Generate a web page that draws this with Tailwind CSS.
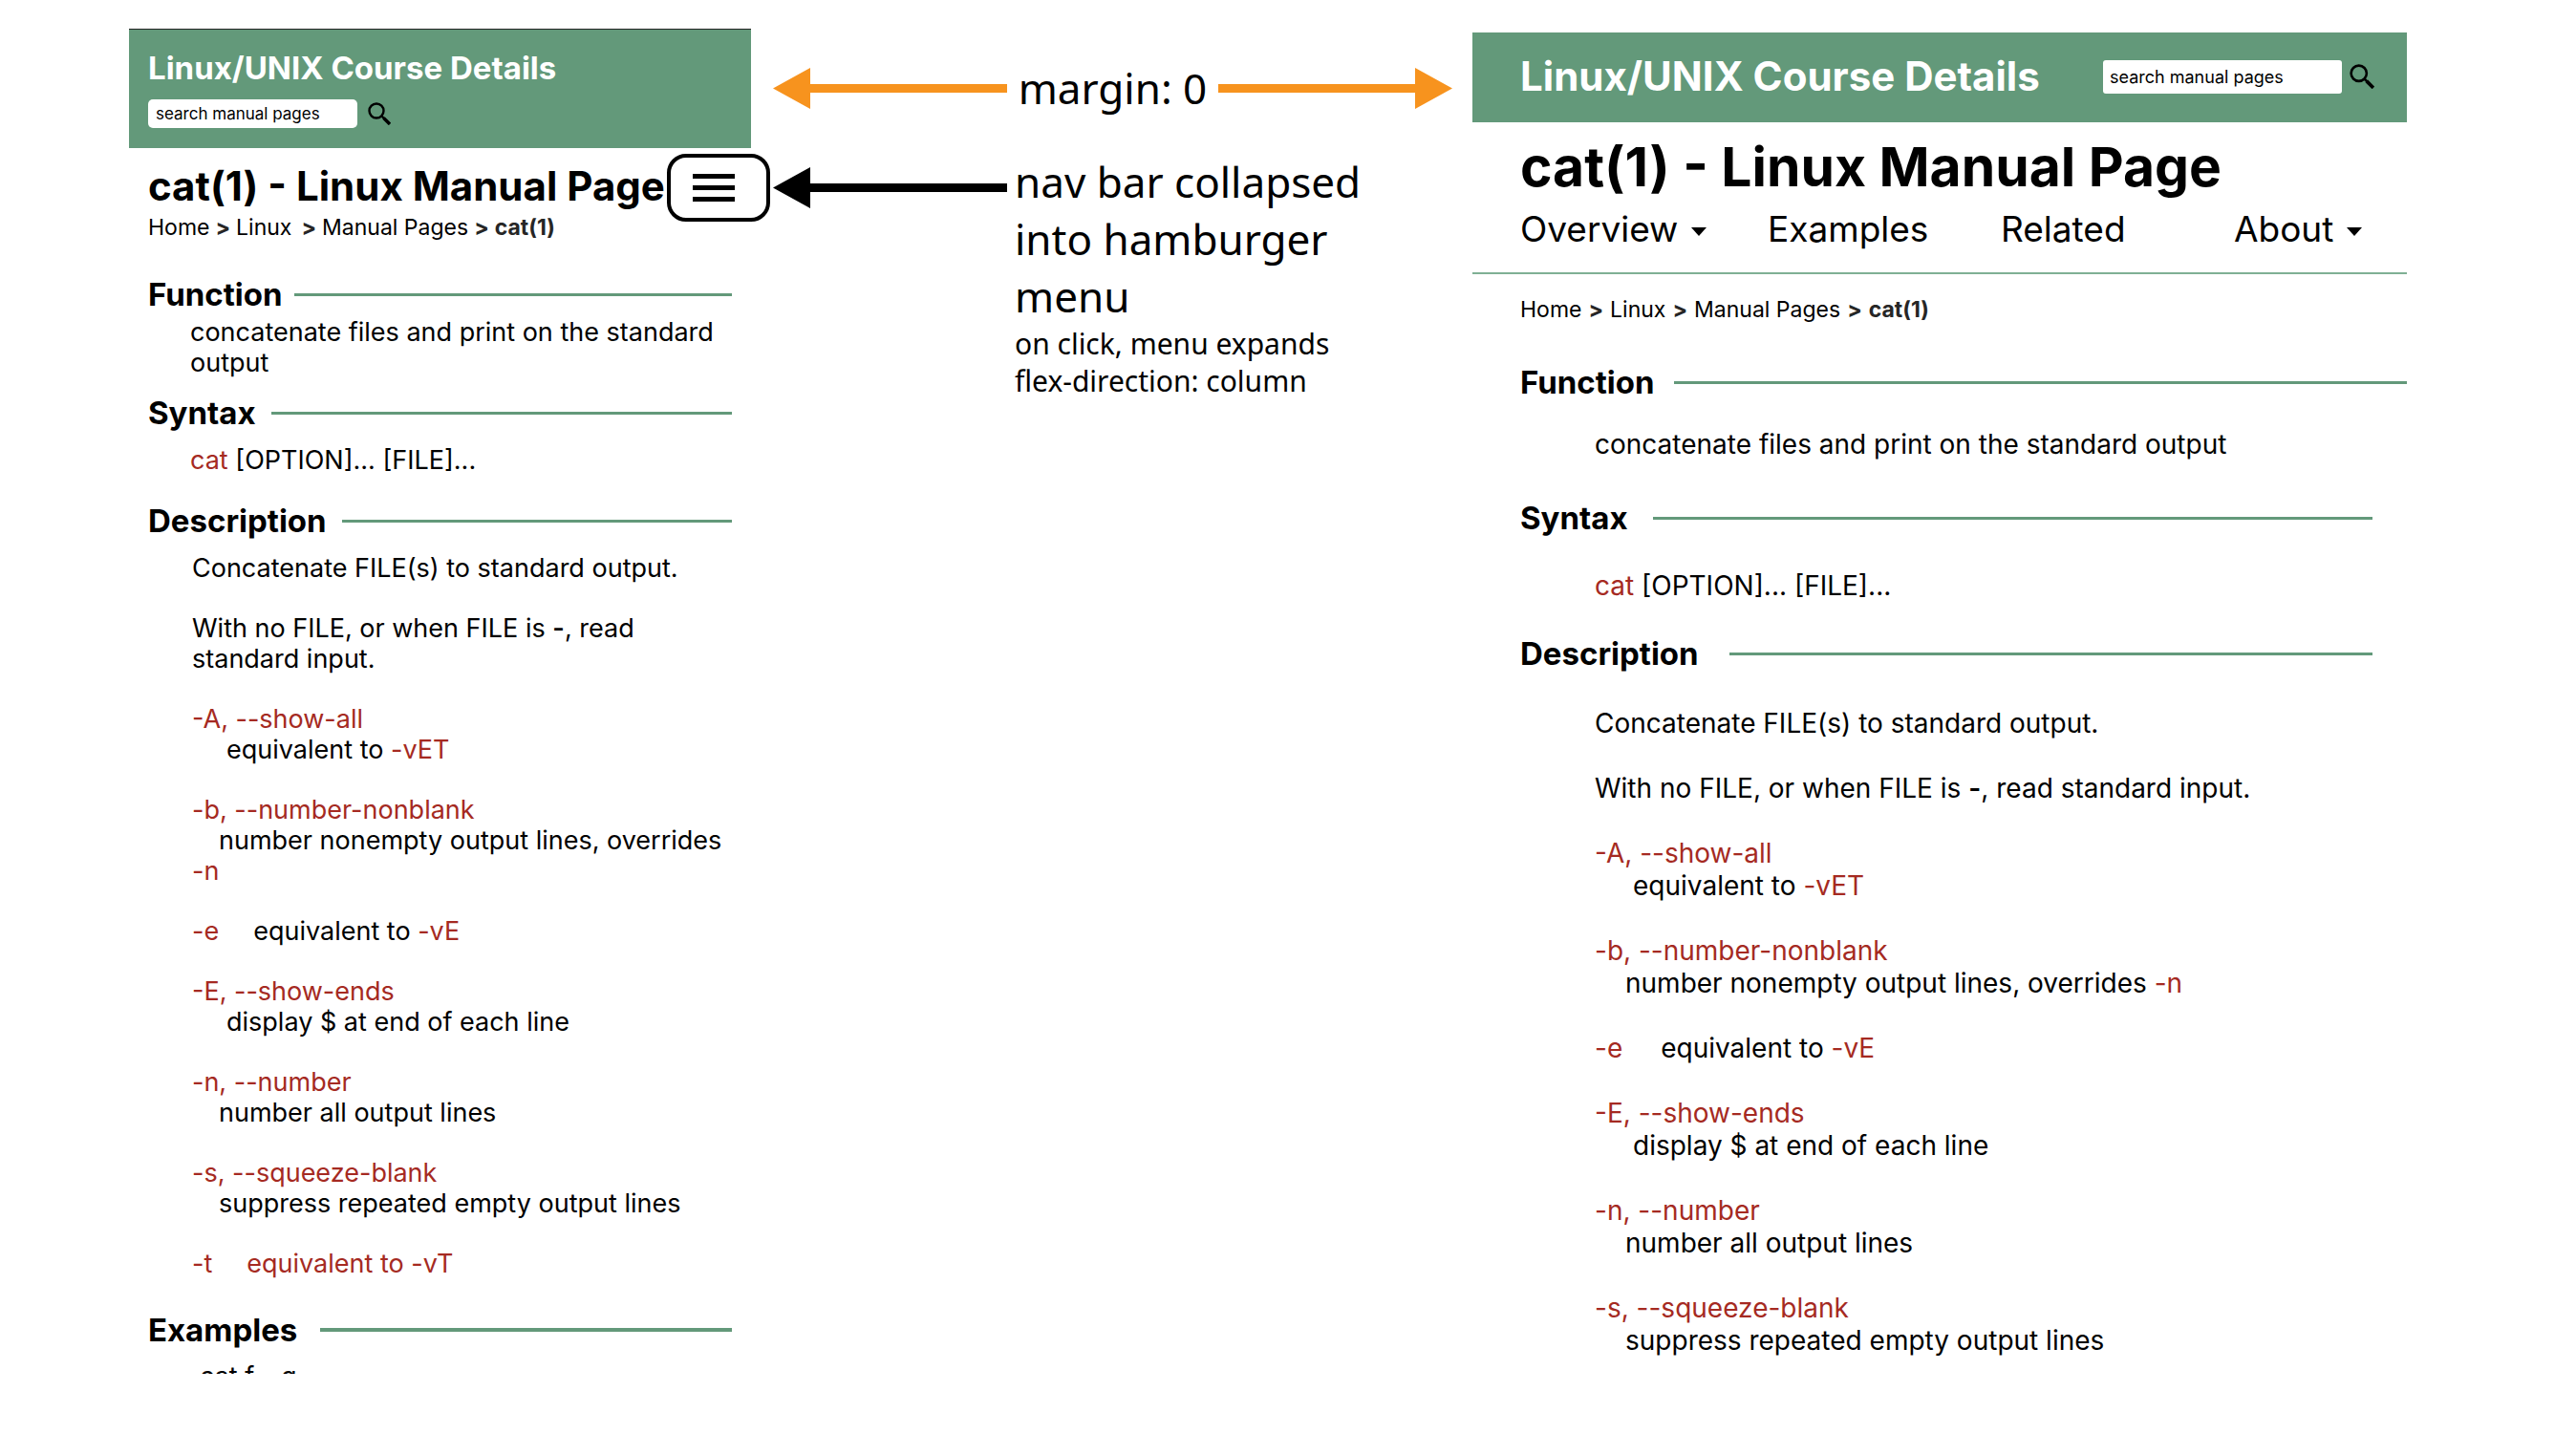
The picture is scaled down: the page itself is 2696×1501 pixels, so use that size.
<!DOCTYPE html>
<html lang="en">
<head>
<meta charset="utf-8">
<meta name="viewport" content="width=device-width, initial-scale=1">
<title>cat(1) - Linux Manual Page: responsive layout notes</title>
<script src="https://cdn.jsdelivr.net/npm/@tailwindcss/browser@4"></script>
</head>
<body class="bg-white text-black font-['Inter',sans-serif]">
<main class="grid grid-cols-[651fr_755fr_978fr] items-start pl-[135px] pr-[177px]">

  <!-- Narrow layout -->
  <section class="relative mt-[30px] min-w-0" aria-label="Narrow layout">
    <header class="border-t border-neutral-800 bg-[#63997a] pt-5 pb-[21px] pl-5">
      <p class="text-[33px] leading-[40px] font-bold text-white">Linux/UNIX Course Details</p>
      <form class="mt-[13px] flex items-center gap-[11px]">
        <input type="text" aria-label="Search manual pages" placeholder="search manual pages" class="h-[30px] w-[219px] rounded-[5px] bg-white px-2 text-[17px] placeholder:text-black">
        <button type="button" aria-label="Search">
          <svg class="block size-6" viewBox="0 0 24 24" fill="none" stroke="black"><circle cx="9" cy="9" r="7.5" stroke-width="2.4"/><path d="M14.5 14.5L17 17" stroke-width="2.4"/><path d="M16.5 16.5L23 23" stroke-width="3.4"/></svg>
        </button>
      </form>
    </header>

    <button type="button" aria-label="Open menu" class="absolute top-[131px] -right-5 flex h-[71px] w-[108px] items-center rounded-[20px] border-4 border-black bg-white pl-[23px]">
      <svg class="h-[29px] w-11" viewBox="0 0 44 29" fill="black"><path d="M0 0h44v5H0zM0 12h44v5H0zM0 24h44v5H0z"/></svg>
    </button>

    <div class="pt-4 pr-5 pl-5">
      <h1 class="text-[42px] leading-[48px] font-bold whitespace-nowrap">cat(1) - Linux Manual Page</h1>
      <nav aria-label="Breadcrumb" class="mt-[5px] flex gap-[6px] text-[23px] leading-[28px] whitespace-nowrap">
        <a href="#">Home</a><span class="font-bold text-neutral-800">&gt;</span><a href="#" class="mr-1">Linux</a><span class="font-bold text-neutral-800">&gt;</span><a href="#">Manual Pages</a><span class="font-bold text-neutral-800">&gt;</span><span class="font-bold text-neutral-800">cat(1)</span>
      </nav>

      <h2 class="mt-9 flex items-center gap-3 text-[33px] leading-[40px] font-bold">Function<span class="h-[3px] flex-1 bg-[#63997a]"></span></h2>
      <p class="mt-1 pr-2 pl-11 text-[27px] leading-[32px]">concatenate files and print on the standard output</p>

      <h2 class="mt-4 flex items-center gap-4 text-[33px] leading-[40px] font-bold">Syntax<span class="h-[3px] flex-1 bg-[#63997a]"></span></h2>
      <p class="mt-[14px] pl-11 text-[27px] leading-[32px]"><span class="text-[#a52a22]">cat</span> [OPTION]... [FILE]...</p>

      <h2 class="mt-[27px] flex items-center gap-4 text-[33px] leading-[40px] font-bold">Description<span class="h-[3px] flex-1 bg-[#63997a]"></span></h2>
      <div class="mt-[14px] flex flex-col gap-[31px] pr-2 pl-[46px] text-[27px] leading-[32px]">
        <p>Concatenate FILE(s) to standard output.</p>
        <p>With no FILE, or when FILE is <b class="font-semibold">-</b>, read standard input.</p>
        <dl><dt class="text-[#a52a22]">-A, --show-all</dt><dd class="indent-9">equivalent to <span class="text-[#a52a22]">-vET</span></dd></dl>
        <dl><dt class="text-[#a52a22]">-b, --number-nonblank</dt><dd class="indent-7">number nonempty output lines, overrides <span class="text-[#a52a22]">-n</span></dd></dl>
        <dl class="flex gap-9"><dt class="text-[#a52a22]">-e</dt><dd>equivalent to <span class="text-[#a52a22]">-vE</span></dd></dl>
        <dl><dt class="text-[#a52a22]">-E, --show-ends</dt><dd class="indent-9">display $ at end of each line</dd></dl>
        <dl><dt class="text-[#a52a22]">-n, --number</dt><dd class="indent-7">number all output lines</dd></dl>
        <dl><dt class="text-[#a52a22]">-s, --squeeze-blank</dt><dd class="indent-7">suppress repeated empty output lines</dd></dl>
        <dl class="flex gap-9 text-[#a52a22]"><dt>-t</dt><dd>equivalent to -vT</dd></dl>
      </div>

      <h2 class="mt-[33px] flex items-center gap-6 text-[33px] leading-[40px] font-bold">Examples<span class="h-1 flex-1 bg-[#63997a]"></span></h2>
      <!-- The frame ends part of the way through this line -->
      <p class="mt-[13px] h-[13px] overflow-hidden pl-[54px] text-[27px] leading-[32px]">cat f - g</p>
    </div>
  </section>

  <!-- Annotations -->
  <aside class="min-w-0 pt-[62px] pr-[21px] pl-[23px] font-['Noto_Sans',sans-serif] text-[44px] leading-[60px]">
    <div class="flex items-center justify-between">
      <svg class="h-[43px] w-[245px] shrink-0" viewBox="0 0 245 43" fill="#f7931e"><path d="M0 21.5L39 0V17H245V26H39V43z"/></svg>
      <p class="whitespace-nowrap">margin: 0</p>
      <svg class="h-[43px] w-[245px] shrink-0" viewBox="0 0 245 43" fill="#f7931e"><path d="M245 21.5L206 0V17H0V26H206V43z"/></svg>
    </div>
    <div class="mt-[38px] flex items-start gap-2">
      <svg class="mt-[15px] h-[43px] w-[245px] shrink-0" viewBox="0 0 245 43" fill="black"><path d="M0 21.5L39 0V17H245V26H39V43z"/></svg>
      <div>
        <p class="max-w-[380px]">nav bar collapsed into hamburger menu</p>
        <p class="text-[30px] leading-[39px]">on click, menu expands<br>flex-direction: column</p>
      </div>
    </div>
  </aside>

  <!-- Wide layout -->
  <section class="mt-[34px] min-w-0" aria-label="Wide layout">
    <header class="flex items-center justify-between bg-[#63997a] pt-[22px] pr-[34px] pb-6 pl-[50px]">
      <p class="text-[42px] leading-[48px] font-bold text-white">Linux/UNIX Course Details</p>
      <form class="flex items-center gap-2">
        <input type="text" aria-label="Search manual pages" placeholder="search manual pages" class="h-[35px] w-[250px] rounded-[3px] bg-white px-[7px] text-[18px] placeholder:text-black">
        <button type="button" aria-label="Search">
          <svg class="block size-[26px]" viewBox="0 0 24 24" fill="none" stroke="black"><circle cx="9" cy="9" r="7.5" stroke-width="2.4"/><path d="M14.5 14.5L17 17" stroke-width="2.4"/><path d="M16.5 16.5L23 23" stroke-width="3.4"/></svg>
        </button>
      </form>
    </header>
    <h1 class="mt-[13px] pl-[50px] text-[57px] leading-[68px] font-bold">cat(1) - Linux Manual Page</h1>
    <nav aria-label="Main" class="mt-[9px] grid grid-cols-[259fr_244fr_244fr_181fr] border-b-2 border-[#7fb094] pb-[23px] pl-[50px] text-[37px] leading-[44px]">
      <button type="button" class="flex items-center gap-[14px]">Overview<svg class="mt-[5px] h-[9px] w-4" viewBox="0 0 16 9"><path d="M0 0h16L8 9z"/></svg></button>
      <a href="#">Examples</a>
      <a href="#">Related</a>
      <button type="button" class="flex items-center gap-[14px]">About<svg class="mt-[5px] h-[9px] w-4" viewBox="0 0 16 9"><path d="M0 0h16L8 9z"/></svg></button>
    </nav>

    <div class="pt-[23px] pl-[50px]">
      <nav aria-label="Breadcrumb" class="flex gap-[7px] text-[23px] leading-[28px] whitespace-nowrap">
        <a href="#">Home</a><span class="font-bold text-neutral-800">&gt;</span><a href="#">Linux</a><span class="font-bold text-neutral-800">&gt;</span><a href="#">Manual Pages</a><span class="font-bold text-neutral-800">&gt;</span><span class="font-bold text-neutral-800">cat(1)</span>
      </nav>

      <h2 class="mt-[42px] flex items-center gap-5 text-[33px] leading-[40px] font-bold">Function<span class="h-[3px] flex-1 bg-[#63997a]"></span></h2>
      <p class="mt-7 pl-[78px] text-[28px] leading-[34px]">concatenate files and print on the standard output</p>

      <h2 class="mt-10 mr-9 flex items-center gap-[26px] text-[33px] leading-[40px] font-bold">Syntax<span class="h-[3px] flex-1 bg-[#63997a]"></span></h2>
      <p class="mt-[34px] pl-[78px] text-[28px] leading-[34px]"><span class="text-[#a52a22]">cat</span> [OPTION]... [FILE]...</p>

      <h2 class="mt-[34px] mr-9 flex items-center gap-8 text-[33px] leading-[40px] font-bold">Description<span class="h-[3px] flex-1 bg-[#63997a]"></span></h2>
      <div class="mt-9 flex flex-col gap-[34px] pl-[78px] text-[28px] leading-[34px]">
        <p>Concatenate FILE(s) to standard output.</p>
        <p>With no FILE, or when FILE is <b class="font-semibold">-</b>, read standard input.</p>
        <dl><dt class="text-[#a52a22]">-A, --show-all</dt><dd class="indent-10">equivalent to <span class="text-[#a52a22]">-vET</span></dd></dl>
        <dl><dt class="text-[#a52a22]">-b, --number-nonblank</dt><dd class="indent-8">number nonempty output lines, overrides <span class="text-[#a52a22]">-n</span></dd></dl>
        <dl class="flex gap-10"><dt class="text-[#a52a22]">-e</dt><dd>equivalent to <span class="text-[#a52a22]">-vE</span></dd></dl>
        <dl><dt class="text-[#a52a22]">-E, --show-ends</dt><dd class="indent-10">display $ at end of each line</dd></dl>
        <dl><dt class="text-[#a52a22]">-n, --number</dt><dd class="indent-8">number all output lines</dd></dl>
        <dl><dt class="text-[#a52a22]">-s, --squeeze-blank</dt><dd class="indent-8">suppress repeated empty output lines</dd></dl>
      </div>
    </div>
  </section>
</main>
</body>
</html>
